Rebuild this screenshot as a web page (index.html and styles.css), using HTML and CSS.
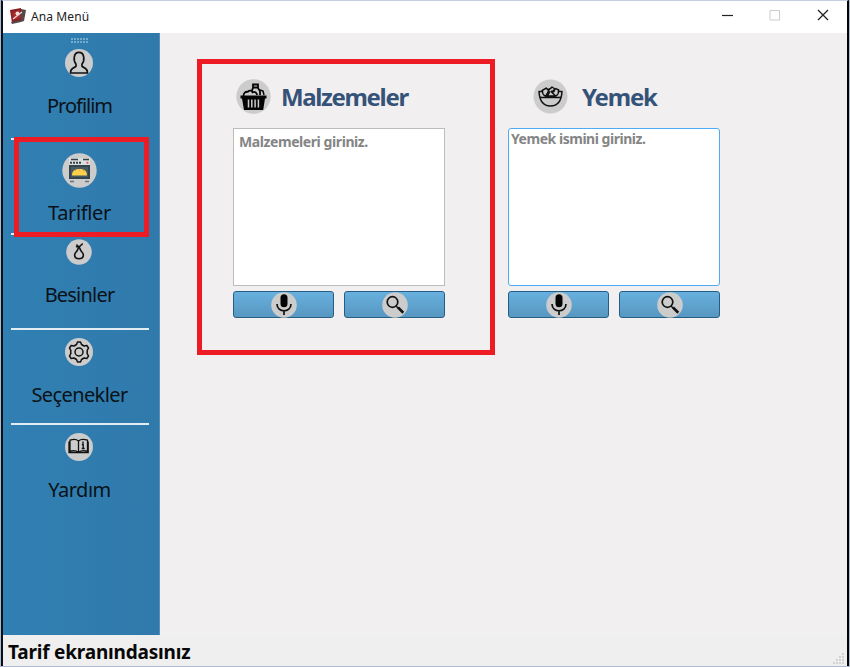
FILE: index.html
```html
<!DOCTYPE html>
<html lang="tr">
<head>
<meta charset="utf-8">
<title>Ana Menü</title>
<link rel="stylesheet" href="styles.css">
</head>
<body>
<div class="window">
  <header class="titlebar">
    <svg class="app-icon" width="18" height="17" viewBox="0 0 18 17"><path d="M1 2 12 0l1 13-10 2Z" fill="#8d1c20"/><path d="m12 1 5 1-2 11-3 1-9 2-1-2 10-2Z" fill="#55474a"/><path d="m3 4 8-2 1 8-8 2Z" fill="#a42b2e"/><circle cx="8.500" cy="5.500" r="2" fill="#f1dfdc"/><path d="m4 11 9-7" stroke="#e8d9d6" stroke-width="1.300"/></svg>
    <span class="window-title">Ana Menü</span>
    <svg class="controls" width="112" height="16" viewBox="0 0 112 16" fill="none"><path d="M2 7.500h11" stroke="#222" stroke-width="1.200"/><path d="M50 2.500h9.500v9.500H50Z" stroke="#ccc"/><path d="m98 2 10 10m0-10L98 12" stroke="#222" stroke-width="1.300"/></svg>
  </header>
  <div class="content">
    <nav class="sidebar">
      <svg class="grip" width="18" height="5" viewBox="0 0 18 5"><path d="M0 1h18M0 4h18" stroke="#8db9d8" stroke-width="1.500" stroke-dasharray="2 1"/></svg>
      <a class="item profile">
        <svg width="28" height="28" viewBox="0 0 28 28"><circle cx="14" cy="14" r="14" fill="#ccc"/><path d="M11 15C8.200 12 8.200 3.400 14 3.400S19.800 12 17 15v2.300c1 1.500 5.500 1.100 5.500 6.700h-17c0-5.600 4.500-5.200 5.500-6.700Z" fill="none" stroke="#111" stroke-width="1.700" stroke-linejoin="round"/></svg>
        <span class="t-profilim">Profilim</span>
      </a>
      <a class="item recipes">
        <svg width="35" height="35" viewBox="0 0 35 35"><circle cx="17.500" cy="17.500" r="17.200" fill="#ccc"/><path d="M7 5h21v7H7Z" fill="#dadddd"/><path d="M9 6.500h7m5 0h6" stroke="#34414a" stroke-width="1.500"/><path d="M8 9.800h11" stroke="#34414a" stroke-width="2" stroke-dasharray="2 1"/><circle cx="25.500" cy="9.800" r="1" fill="#e64b5d"/><path d="M7 12h21v14H7Z" fill="#34434c"/><path d="M9 14h17v10H9Z" fill="#465963"/><path d="M10 22.500c0-4 2-6.500 7.500-6.500s7.500 2.500 7.500 6.500Z" fill="#ffd04b"/><path d="m13 17 1 1.500m3-2 1 1.500m3-1 1 1.500" stroke="#f6953b"/><path d="M8 28.500h4m11 0h4" stroke="#69767c" stroke-width="1.500"/></svg>
        <span class="t-tarifler">Tarifler</span>
      </a>
      <a class="item foods">
        <svg width="26" height="26" viewBox="0 0 26 26"><circle cx="13" cy="13" r="12.800" fill="#ccc"/><path d="M13 8.500c-1 0-.9 2.600-2.900 4.500-2.100 2-2.400 6.700 2.900 6.700s5-4.700 2.900-6.700C13.900 11.100 14 8.500 13 8.500Zm0-.5-2.200-2m2.200 2 3.300-3M10.500 7.800h3.200" fill="none" stroke="#111" stroke-width="1.600" stroke-linecap="round"/></svg>
        <span class="t-besinler">Besinler</span>
      </a>
      <a class="item options">
        <svg width="28" height="28" viewBox="0 0 28 28" fill="none"><circle cx="14" cy="14" r="14" fill="#ccc"/><path d="M12.500 4h3l1 2.500 2.500 1.500 2.800-.6L23.500 10l-1.300 2.300v3.400l1.300 2.300-1.700 2.600L19 20l-2.500 1.500-1 2.500h-3l-1-2.500L9 20l-2.800.6L4.500 18l1.300-2.300v-3.400L4.500 10l1.700-2.600L9 8l2.500-1.500Z" stroke="#111" stroke-width="1.500" stroke-linejoin="round"/><circle cx="14" cy="14" r="4" stroke="#111" stroke-width="1.500"/></svg>
        <span class="t-secenekler">Seçenekler</span>
      </a>
      <a class="item help">
        <svg width="28" height="28" viewBox="0 0 28 28" fill="none"><circle cx="14" cy="14" r="14" fill="#ccc"/><path d="M13.500 8C11.500 6.200 8 6.200 5 7.200v11c3-.8 6.500-.5 8.500 1 2-1.500 6-1.800 9-1v-11c-3-1-7-1-9 .8Zm0 0v11M4 8.500v11h19.200v-11" stroke="#111" stroke-width="1.300"/><path d="M18 8.500v2m-1.200 1h1.400v4m-1.500 0h3" stroke="#111" stroke-width="1.400"/></svg>
        <span class="t-yardim">Yardım</span>
      </a>
    </nav>
    <main class="panels">
      <section class="panel">
        <h2><svg width="35" height="35" viewBox="0 0 35 35" fill="none"><circle cx="17.500" cy="17.500" r="17.200" fill="#ccc"/><path d="M4.500 16.500h26v3h-1.500L27.200 31H8L6 19.500H4.500Z" fill="#050505"/><path d="M12.500 20.500v8m3.300-8v8m3.300-8v8m3.300-8v8" stroke="#ccc" stroke-width="1.500"/><path d="M7.500 17c0-3 2-4.500 4.300-4.200 1.700-2 4.300-1 4.700.5 2.500-1 4.500.5 4.500 2.700M16 12c0-2 1-2 1-3.500h5c0 2 2 2 2 4.500v3M17 5.500h5v3h-5Z" stroke="#050505" stroke-width="1.800"/><path d="m24 11 3 1 1 4" stroke="#050505" stroke-width="1.500"/></svg><span class="t-malzemeler">Malzemeler</span></h2>
        <div class="entry"><span class="t-m-hint">Malzemeleri giriniz.</span></div>
        <div class="actions">
          <button aria-label="Mikrofon"><svg width="26" height="26" viewBox="0 0 26 26" fill="none"><circle cx="13" cy="13" r="12.800" fill="#ccc"/><rect x="9.500" y="2.300" width="7" height="13" rx="3.500" fill="#050505"/><path d="M6 12c0 9 14 9 14 0M13 18.500V23" stroke="#111" stroke-width="1.700"/></svg></button>
          <button aria-label="Ara"><svg width="26" height="26" viewBox="0 0 26 26" fill="none"><circle cx="13" cy="13" r="12.800" fill="#ccc"/><circle cx="10.500" cy="10" r="5.300" stroke="#111" stroke-width="1.700"/><path d="m14 14 2 2" stroke="#111" stroke-width="1.500"/><path d="m16 15.500 5.300 5.200" stroke="#111" stroke-width="2.600"/></svg></button>
        </div>
      </section>
      <section class="panel meal">
        <h2><svg width="35" height="35" viewBox="0 0 35 35" fill="none"><circle cx="17.500" cy="17.500" r="17" fill="#ccc"/><path d="M6 12.500h3.500c0 5 3 4.500 8 4.500s8 .5 8-4.500H29c-.5 9-4.500 14.500-11.500 14.500S6.500 21.500 6 12.500Zm1.500 5.800c3 .4 17 .4 20 0M9.500 13l-.3-1.500 4-2.400 2.600 2.500-2.500 4.400m1.200-5 4-2.200m-3 2.500 3.500-3.300 3 2-1.200 2.800-3-.5m-1 0-2 4m3-4 4 4m-2-4.500 3-2.200 2.900 1.400-.5 2.500" stroke="#111" stroke-width="1.500" stroke-linejoin="round"/></svg><span class="t-yemek">Yemek</span></h2>
        <div class="entry focused"><span class="t-y-hint">Yemek ismini giriniz.</span></div>
        <div class="actions">
          <button aria-label="Mikrofon"><svg width="26" height="26" viewBox="0 0 26 26" fill="none"><circle cx="13" cy="13" r="12.800" fill="#ccc"/><rect x="9.500" y="2.300" width="7" height="13" rx="3.500" fill="#050505"/><path d="M6 12c0 9 14 9 14 0M13 18.500V23" stroke="#111" stroke-width="1.700"/></svg></button>
          <button aria-label="Ara"><svg width="26" height="26" viewBox="0 0 26 26" fill="none"><circle cx="13" cy="13" r="12.800" fill="#ccc"/><circle cx="10.500" cy="10" r="5.300" stroke="#111" stroke-width="1.700"/><path d="m14 14 2 2" stroke="#111" stroke-width="1.500"/><path d="m16 15.500 5.300 5.200" stroke="#111" stroke-width="2.600"/></svg></button>
        </div>
      </section>
    </main>
  </div>
  <footer class="status"><span class="t-status">Tarif ekranındasınız</span>
    <svg class="resize" width="12" height="12" viewBox="0 0 12 12"><path d="M10 1h2M7 4h2m1 0h2M4 7h2m1 0h2m1 0h2M1 10h2m1 0h2m1 0h2m1 0h2" stroke="#d2d2d2" stroke-width="2"/></svg>
  </footer>
</div>
<div class="marker marker-nav"></div>
<div class="marker marker-panel"></div>
</body>
</html>
```

FILE: styles.css
```css
* { box-sizing: border-box; }
body { margin: 0; width: 850px; height: 667px; overflow: hidden; background: #aebbd0; }
.window { display: flex; flex-direction: column; width: 848px; height: 666px; margin-left: 1px; border-top: 1px solid #c5cfe2; border-right: 2px solid #050505; border-left: 2px solid #071019; background: #f1eff0; font-family: "Noto Sans", sans-serif; }
svg { display: block; flex: none; }
.titlebar { display: flex; align-items: center; height: 32px; flex: none; padding: 0 15px 2px 6px; background: #fff; font-size: 12px; color: #222; }
.window-title { margin-left: 4px; letter-spacing: .1px; }
.controls { margin-left: auto; }
.content { display: flex; flex: 1; min-height: 0; }
.sidebar { display: flex; flex-direction: column; width: 157px; padding: 5px 11px 0 8px; background: linear-gradient(90deg, #3180b3, #3079ab); border-right: 1px solid #578fb9; }
.grip { align-self: center; }
.item { display: flex; flex-direction: column; align-items: center; width: 138px; height: 95px; border-bottom: 2px solid #e2edf3; color: #0a1117; font-size: 20px; line-height: 28px; }
.item svg { margin-right: 2px; }
.item span { white-space: nowrap; margin-top: auto; margin-right: 1px; }
.profile { height: 97px; padding: 6px 0 18px; }
.recipes { padding: 13px 0 6px; }
.foods { padding: 4px 0 19px; }
.options { padding: 8px 0 14px; }
.help { padding: 8px 0 16px; border: 0; }
.t-profilim { letter-spacing: -1px; }
.t-tarifler { letter-spacing: -.35px; }
.t-besinler { letter-spacing: -.8px; }
.t-secenekler { letter-spacing: -.6px; }
.t-yardim { letter-spacing: -.5px; }
.panels { display: flex; gap: 63px; padding: 45px 0 0 73px; }
.panel { width: 212px; }
h2 { display: flex; align-items: center; height: 36px; margin: 0 0 14px; padding-left: 3px; font: bold 24px "Noto Sans", sans-serif; color: #355379; }
h2 span { margin-left: 10px; }
.meal h2 { padding-left: 25px; }
.meal h2 span { margin-left: 14px; }
.t-malzemeler { letter-spacing: -1.35px; }
.t-yemek { letter-spacing: -1.2px; }
.entry { height: 158px; padding: 4px 5px; border: 1px solid #bcbcbc; background: #fff; color: #858585; font-size: 14px; font-weight: bold; line-height: 18px; }
.focused { padding: 1px 2px; border-color: #4eabf5; border-radius: 3px; }
.t-m-hint { letter-spacing: -.42px; }
.t-y-hint { letter-spacing: -.47px; }
.actions { display: flex; gap: 10px; margin-top: 5px; }
button { display: flex; flex: 1; align-items: center; justify-content: center; height: 27px; padding: 0; border: 1px solid #255e84; border-radius: 3px; background: linear-gradient(#68b0df, #5797c0); }
.status { display: flex; align-items: center; height: 31px; flex: none; padding: 2px 3px 0 5px; background: #efefef; color: #080808; font-size: 19px; font-weight: bold; }
.t-status { letter-spacing: -.2px; }
.resize { margin: 14px 0 0 auto; }
.marker { position: absolute; border: 5px solid #ed1c24; pointer-events: none; }
.marker-nav { left: 14px; top: 137px; width: 135px; height: 100px; }
.marker-panel { left: 197px; top: 59px; width: 298px; height: 296px; }
```
